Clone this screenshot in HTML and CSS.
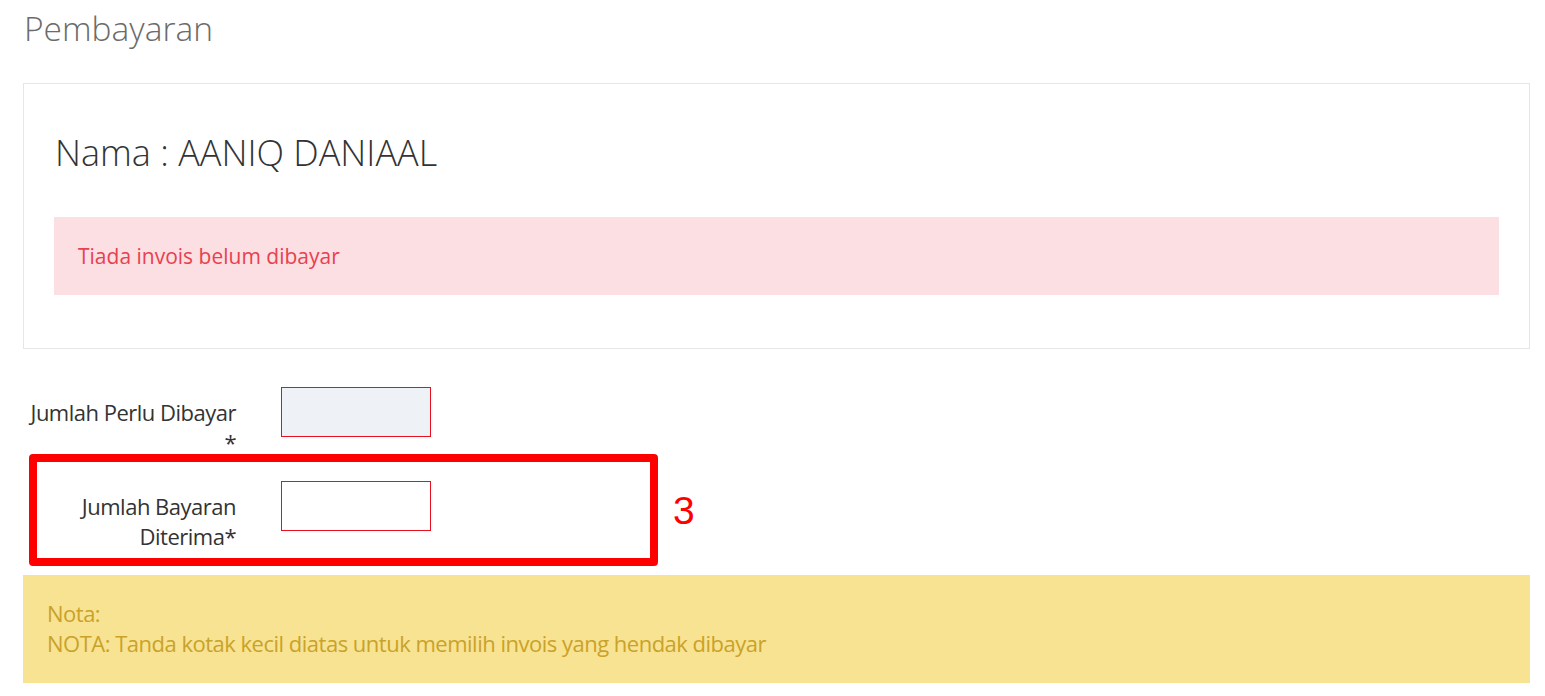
FILE: index.html
```html
<!DOCTYPE html>
<html lang="ms">
<head>
  <meta charset="UTF-8" />
  <meta name="viewport" content="width=device-width, initial-scale=1.0"/>
  <title>Pembayaran</title>
  <link rel="stylesheet" href="styles.css">
</head>
<body>
  <div class="page">
    <h2 class="page-title">Pembayaran</h2>

    <div class="card">
      <h3 class="student-name">Nama : AANIQ DANIAAL</h3>
      <div class="alert alert-danger">Tiada invois belum dibayar</div>
    </div>

    <form class="pay-form">
      <div class="form-row">
        <label class="form-label" for="perlu">Jumlah Perlu Dibayar *</label>
        <input class="form-input readonly" id="perlu" type="text" readonly>
      </div>
      <div class="form-row">
        <label class="form-label" for="terima">Jumlah Bayaran Diterima*</label>
        <input class="form-input" id="terima" type="text">
      </div>
      <div class="mark-box"></div>
      <div class="mark-num">3</div>
    </form>

    <div class="note">
      Nota:<br>
      NOTA: Tanda kotak kecil diatas untuk memilih invois yang hendak dibayar
    </div>
  </div>
</body>
</html>
```

FILE: styles.css
```css
body {
  margin: 0;
  font-family: 'Open Sans', sans-serif;
  background: #fff;
  color: #333;
}

.page {
  padding: 0 15px 0 23px;
}

.page-title {
  margin: 0;
  padding: 6px 0 0 1px;
  font-size: 33.5px;
  font-weight: 300;
  color: #6b6b6b;
  line-height: 44px;
}

.card {
  margin-top: 33px;
  border: 1px solid #e6e6e6;
  padding: 44px 30px 53px 30px;
}

.student-name {
  margin: 0 0 39px 1px;
  font-size: 36px;
  font-weight: 300;
  color: #333;
  line-height: 50px;
}

.alert {
  padding: 0 24px;
  height: 78px;
  display: flex;
  align-items: center;
  font-size: 21px;
}

.alert-danger {
  background: #fbdfe3;
  color: #e8414f;
}

.pay-form {
  position: relative;
  padding-top: 38px;
}

.form-row {
  display: flex;
  align-items: flex-start;
  margin-bottom: 24px;
}

.form-row:last-of-type {
  margin-bottom: 26px;
}

.form-label {
  width: 213px;
  text-align: right;
  font-size: 22px;
  line-height: 30px;
  color: #333;
  padding-top: 10px;
  letter-spacing: -0.5px;
}

.form-input {
  margin-left: 45px;
  width: 150px;
  height: 50px;
  box-sizing: border-box;
  border: 1px solid #e8101e;
  background: #fff;
  outline: none;
}

.form-input.readonly {
  background: #eef1f5;
}

.mark-box {
  position: absolute;
  left: 6px;
  top: 105px;
  width: 629px;
  height: 112px;
  box-sizing: border-box;
  border: 8px solid #ff0000;
  border-radius: 4px;
}

.mark-num {
  position: absolute;
  left: 650px;
  top: 140px;
  font-family: 'Liberation Sans', Arial, sans-serif;
  font-size: 39px;
  color: #ff0000;
}

.note {
  background: #f8e392;
  color: #c9a22a;
  padding: 23px 24px 25px;
  font-size: 22px;
  line-height: 30px;
  letter-spacing: -0.5px;
}
```
